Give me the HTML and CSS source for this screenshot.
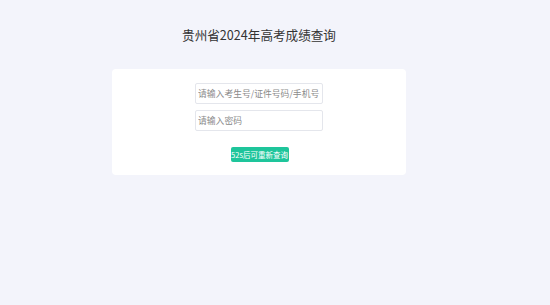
FILE: index.html
```html
<!DOCTYPE html>
<html lang="zh-CN">
<head>
    <meta charset="UTF-8">
    <meta name="viewport" content="width=device-width, initial-scale=1.0">
    <title>贵州省2024年高考成绩查询</title>
    <link rel="stylesheet" href="styles.css">
</head>
<body>
    <div class="page">
        <h1 class="title">贵州省2024年高考成绩查询</h1>
        <div class="card">
            <input type="text" class="field" placeholder="请输入考生号/证件号码/手机号">
            <input type="password" class="field" placeholder="请输入密码">
            <button class="btn" disabled>52s后可重新查询</button>
        </div>
    </div>
</body>
</html>
```

FILE: styles.css
```css
body {
    margin: 0;
    background: #f3f4fb;
    font-family: "Noto Sans CJK SC", "Noto Sans", sans-serif;
    color: #333;
}
.page {
    width: 518px;
    display: flex;
    flex-direction: column;
    align-items: center;
}
.title {
    margin: 25px 0 0;
    height: 20px;
    line-height: 20px;
    font-size: 12.6px;
    font-weight: normal;
    color: #333;
}
.card {
    margin-top: 24px;
    width: 294px;
    height: 106px;
    box-sizing: border-box;
    background: #fff;
    border-radius: 4px;
    padding-top: 14px;
    display: flex;
    flex-direction: column;
    align-items: center;
}
.field {
    width: 128px;
    height: 21px;
    box-sizing: border-box;
    border: 1px solid #e4e6ec;
    border-radius: 2px;
    padding: 0 2px;
    margin-bottom: 6px;
    font-family: "Noto Sans CJK SC", sans-serif;
    font-size: 8.8px;
    outline: none;
}
.field::placeholder {
    color: #8a8a8a;
}
.btn {
    margin-top: 10px;
    margin-left: 1px;
    width: 58px;
    height: 15px;
    padding: 0;
    border: none;
    border-radius: 2px;
    background: #1ec59b;
    color: #fff;
    font-family: "Noto Sans CJK SC", sans-serif;
    font-size: 7.5px;
}
```
